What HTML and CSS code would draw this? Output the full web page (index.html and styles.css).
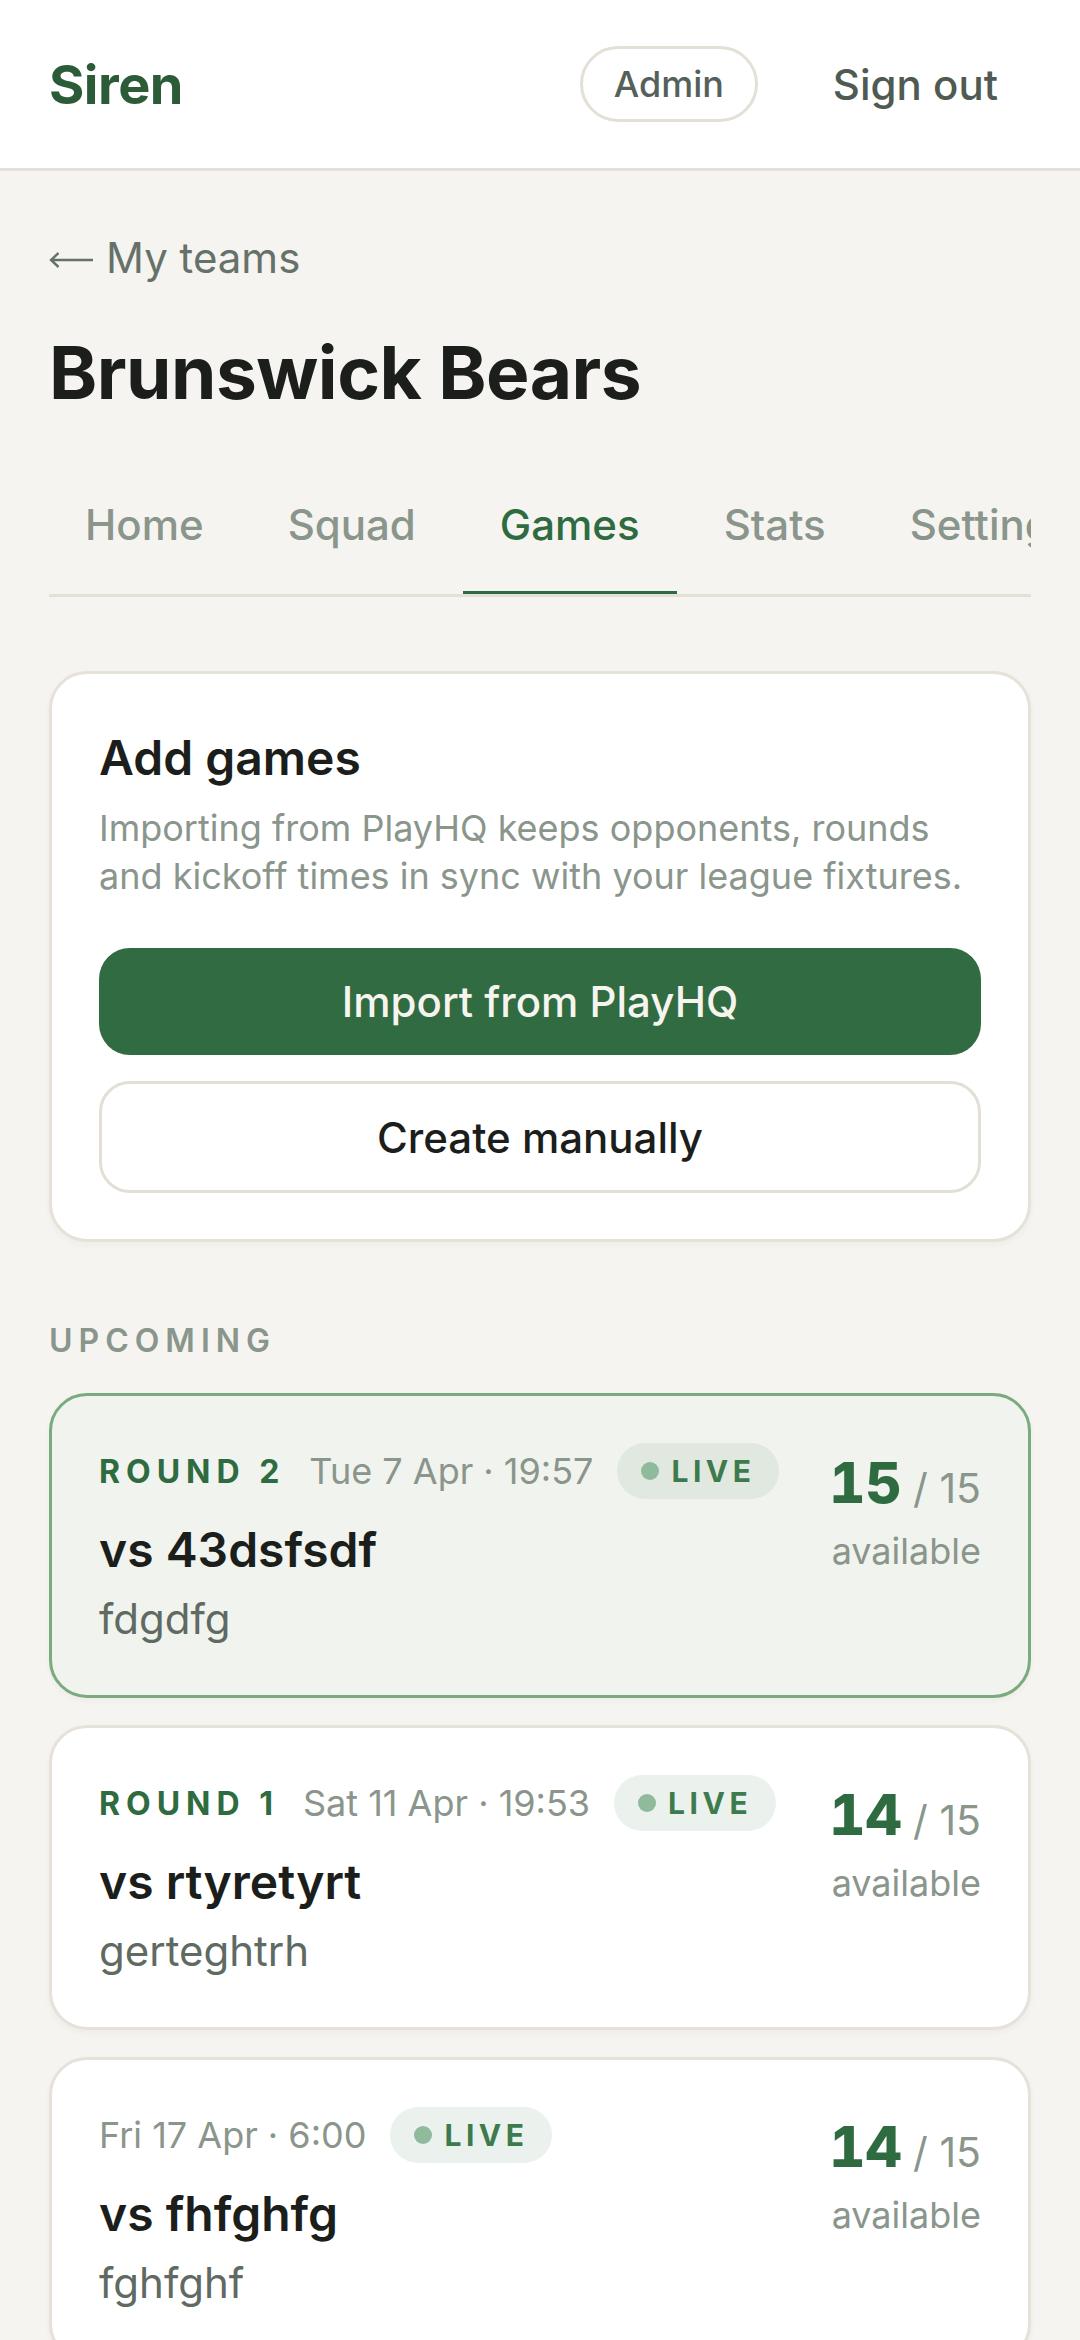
FILE: index.html
```html
<!DOCTYPE html>
<html lang="en">
<head>
    <meta charset="UTF-8">
    <meta name="viewport" content="width=device-width, initial-scale=1.0">
    <title>Brunswick Bears - Games</title>
    <link rel="stylesheet" href="styles.css">
</head>
<body>
    <header class="topbar">
        <a class="brand" href="#">Siren</a>
        <nav class="topbar-actions">
            <a class="admin-pill" href="#">Admin</a>
            <a class="signout" href="#">Sign out</a>
        </nav>
    </header>

    <main class="content">
        <a class="back-link" href="#"><svg class="arrow" width="44" height="16" viewBox="0 0 44 16"><path d="M2 8H44M9.5 1L2 8l7.5 7" fill="none" stroke="currentColor" stroke-width="2.4"/></svg>My teams</a>
        <h1 class="team-name">Brunswick Bears</h1>

        <div class="tabs">
            <a class="tab" href="#">Home</a>
            <a class="tab" href="#">Squad</a>
            <a class="tab active" href="#">Games</a>
            <a class="tab" href="#">Stats</a>
            <a class="tab" href="#">Settings</a>
        </div>

        <section class="card add-card">
            <h2>Add games</h2>
            <p>Importing from PlayHQ keeps opponents, rounds and kickoff times in sync with your league fixtures.</p>
            <button class="btn btn-primary">Import from PlayHQ</button>
            <button class="btn btn-outline">Create manually</button>
        </section>

        <h3 class="section-label">Upcoming</h3>

        <div class="game-list">
            <div class="card game next">
                <div class="game-info">
                    <div class="game-meta">
                        <span class="round">Round 2</span>
                        <span class="when">Tue 7 Apr · 19:57</span>
                        <span class="live"><i class="dot"></i>LIVE</span>
                    </div>
                    <div class="opponent">vs 43dsfsdf</div>
                    <div class="venue">fdgdfg</div>
                </div>
                <div class="avail">
                    <div class="count"><b>15</b> / 15</div>
                    <div class="avail-label">available</div>
                </div>
            </div>

            <div class="card game">
                <div class="game-info">
                    <div class="game-meta">
                        <span class="round">Round 1</span>
                        <span class="when">Sat 11 Apr · 19:53</span>
                        <span class="live"><i class="dot"></i>LIVE</span>
                    </div>
                    <div class="opponent">vs rtyretyrt</div>
                    <div class="venue">gerteghtrh</div>
                </div>
                <div class="avail">
                    <div class="count"><b>14</b> / 15</div>
                    <div class="avail-label">available</div>
                </div>
            </div>

            <div class="card game">
                <div class="game-info">
                    <div class="game-meta">
                        <span class="when">Fri 17 Apr · 6:00</span>
                        <span class="live"><i class="dot"></i>LIVE</span>
                    </div>
                    <div class="opponent">vs fhfghfg</div>
                    <div class="venue">fghfghf</div>
                </div>
                <div class="avail">
                    <div class="count"><b>14</b> / 15</div>
                    <div class="avail-label">available</div>
                </div>
            </div>
        </div>
    </main>
</body>
</html>
```

FILE: styles.css
```css
* {
    box-sizing: border-box;
}

body {
    margin: 0;
    font-family: 'Inter', 'Noto Sans', sans-serif;
    background-color: #f5f4f0;
    color: #1b1e1b;
}

a {
    text-decoration: none;
    color: inherit;
}

/* top bar */
.topbar {
    height: 171px;
    display: flex;
    align-items: center;
    justify-content: space-between;
    padding: 0 49px;
    background: #ffffff;
    border-bottom: 3px solid #e5e0d7;
}

.brand {
    font-size: 54px;
    font-weight: 700;
    color: #2c5c37;
    letter-spacing: -0.5px;
}

.topbar-actions {
    display: flex;
    align-items: center;
    gap: 38px;
}

.admin-pill {
    height: 76px;
    display: flex;
    align-items: center;
    padding: 0 31px;
    border: 3px solid #e4e0d7;
    border-radius: 999px;
    font-size: 36px;
    font-weight: 500;
    color: #56605a;
}

.signout {
    padding: 0 33px 0 37px;
    font-size: 42px;
    font-weight: 500;
    color: #4f5a52;
}

/* page */
.content {
    padding: 57px 49px 80px;
}

.back-link {
    display: block;
    font-size: 42px;
    line-height: 60px;
    color: #66716a;
}

.back-link .arrow {
    vertical-align: middle;
    margin: -4px 13px 0 0;
}

.team-name {
    margin: 41px 0 0;
    font-size: 73px;
    line-height: 88px;
    font-weight: 700;
    letter-spacing: -0.5px;
}

.tabs {
    display: flex;
    gap: 10px;
    margin-top: 43px;
    overflow: hidden;
    border-bottom: 3px solid #e4e0d7;
}

.tab {
    flex: none;
    padding: 35px 37px 36px;
    font-size: 42px;
    line-height: 60px;
    font-weight: 500;
    color: #8a958c;
    border-bottom: 4px solid transparent;
    margin-bottom: -1px;
}

.tab:first-child {
    padding-left: 36px;
}

.tab.active {
    color: #2f6b40;
    border-bottom-color: #2f6b40;
}

/* cards */
.card {
    background: #ffffff;
    border: 3px solid #e6e2d9;
    border-radius: 38px;
    box-shadow: 0 3px 6px rgba(60, 50, 30, 0.04);
}

.add-card {
    margin-top: 74px;
    padding: 56px 47px 46px;
}

.add-card h2 {
    margin: 0;
    font-size: 48px;
    line-height: 56px;
    font-weight: 600;
}

.add-card p {
    margin: 18px 8px 0 0;
    font-size: 36px;
    line-height: 48px;
    color: #8a958c;
}

.btn {
    display: block;
    width: 100%;
    font-family: inherit;
    font-size: 42px;
    font-weight: 500;
    border-radius: 31px;
    cursor: pointer;
}

.btn-primary {
    height: 107px;
    margin-top: 48px;
    border: none;
    background: #316b41;
    color: #f6f4ee;
}

.btn-outline {
    height: 112px;
    margin-top: 26px;
    border: 3px solid #e3dfd6;
    background: #ffffff;
    color: #1b1e1b;
}

.section-label {
    margin: 79px 0 0;
    font-size: 32px;
    line-height: 40px;
    font-weight: 600;
    letter-spacing: 6px;
    text-transform: uppercase;
    color: #8a958c;
}

.game-list {
    display: flex;
    flex-direction: column;
    gap: 27px;
    margin-top: 32px;
}

.game {
    display: flex;
    justify-content: space-between;
    padding: 47px 47px 48px;
}

.game.next {
    background: #f1f3ee;
    border-color: #7aab7e;
}

.game-meta {
    display: flex;
    align-items: center;
    gap: 24px;
    height: 56px;
}

.round {
    font-size: 32px;
    font-weight: 700;
    letter-spacing: 6px;
    text-transform: uppercase;
    color: #2f6b40;
}

.when {
    font-size: 36px;
    color: #8a958c;
}

.live {
    display: flex;
    align-items: center;
    height: 56px;
    padding: 0 24px;
    border-radius: 999px;
    background: #ebf1ec;
    font-size: 30px;
    font-weight: 700;
    letter-spacing: 4.5px;
    color: #3d7b4e;
}

.game.next .live {
    background: #e0e8df;
}

.live .dot {
    width: 18px;
    height: 18px;
    margin-right: 12px;
    border-radius: 50%;
    background: #8fba9c;
}

.opponent {
    margin-top: 21px;
    font-size: 48px;
    line-height: 60px;
    font-weight: 600;
}

.venue {
    margin-top: 11px;
    font-size: 42px;
    line-height: 56px;
    color: #5f6a62;
}

.avail {
    text-align: right;
}

.count {
    font-size: 41px;
    line-height: 80px;
    color: #8a958c;
}

.count b {
    font-size: 56px;
    font-weight: 800;
    font-variant-numeric: tabular-nums;
    color: #2f6b40;
}

.avail-label {
    margin-top: -2px;
    font-size: 36px;
    line-height: 50px;
    color: #8a958c;
}
```
